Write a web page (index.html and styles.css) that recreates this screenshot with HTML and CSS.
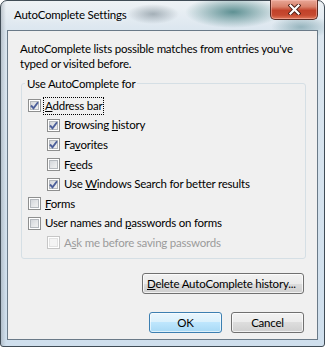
FILE: index.html
```html
<!DOCTYPE html>
<html>
<head>
<meta charset="utf-8">
<link rel="stylesheet" href="styles.css">
</head>
<body>
<div class="window">
  <div class="titlebar">
    <span class="title">AutoComplete Settings</span>
    <div class="close">
      <svg width="13" height="11" viewBox="0 0 13 11">
        <path d="M2.5 1.5 L10.5 9.5 M10.5 1.5 L2.5 9.5" stroke="#4a1d14" stroke-width="4" stroke-linecap="square" fill="none"/>
        <path d="M2.5 1.5 L10.5 9.5 M10.5 1.5 L2.5 9.5" stroke="#ffffff" stroke-width="2.2" stroke-linecap="square" fill="none"/>
      </svg>
    </div>
  </div>
  <div class="client">
    <p class="intro">AutoComplete lists possible matches from entries you've typed or visited before.</p>
    <fieldset class="group">
      <legend>Use AutoComplete for</legend>
      <div class="row"><span class="cb"><svg class="tick" viewBox="0 0 9 9"><path d="M1 4.5 L3.5 7.2 L8 1.2"/></svg></span><span class="label focus"><u>A</u>ddress bar</span></div>
      <div class="row sub"><span class="cb"><svg class="tick" viewBox="0 0 9 9"><path d="M1 4.5 L3.5 7.2 L8 1.2"/></svg></span><span class="label">Browsing <u>h</u>istory</span></div>
      <div class="row sub"><span class="cb"><svg class="tick" viewBox="0 0 9 9"><path d="M1 4.5 L3.5 7.2 L8 1.2"/></svg></span><span class="label">Fa<u>v</u>orites</span></div>
      <div class="row sub"><span class="cb"></span><span class="label">F<u>e</u>eds</span></div>
      <div class="row sub"><span class="cb"><svg class="tick" viewBox="0 0 9 9"><path d="M1 4.5 L3.5 7.2 L8 1.2"/></svg></span><span class="label">Use <u>W</u>indows Search for better results</span></div>
      <div class="row"><span class="cb"></span><span class="label"><u>F</u>orms</span></div>
      <div class="row"><span class="cb"></span><span class="label">User names and <u>p</u>asswords on forms</span></div>
      <div class="row sub disabled"><span class="cb"></span><span class="label">A<u>s</u>k me before saving passwords</span></div>
    </fieldset>
    <div class="actions">
      <button class="btn wide"><u>D</u>elete AutoComplete history...</button>
    </div>
    <div class="footer">
      <button class="btn default">OK</button>
      <button class="btn">Cancel</button>
    </div>
  </div>
</div>
</body>
</html>
```

FILE: styles.css
```css
* { box-sizing: border-box; }
html, body { margin: 0; padding: 0; }
body {
  width: 325px;
  height: 347px;
  overflow: hidden;
  background: #ffffff;
  font-family: Lato, "Segoe UI", sans-serif;
  font-size: 11.5px;
  letter-spacing: -0.22px;
  color: #000;
}
.window {
  width: 325px;
  height: 347px;
  border: 1px solid #404c56;
  border-radius: 7px 7px 3px 3px;
  padding: 0 6px 6px 6px;
  display: flex;
  flex-direction: column;
  background:
    radial-gradient(ellipse 26px 10px at 152px 13px, rgba(110,125,135,0.55), rgba(110,125,135,0)),
    radial-gradient(ellipse 48px 16px at 232px 11px, rgba(70,128,130,0.85), rgba(70,128,130,0)),
    radial-gradient(ellipse 30px 12px at 300px 26px, rgba(80,130,140,0.5), rgba(80,130,140,0)),
    linear-gradient(90deg, rgba(150,160,170,0.5) 0, rgba(150,160,170,0) 5px),
    linear-gradient(180deg, #eef2f5 0, #dbe6ef 30px, #cfdfed 100%);
}
.titlebar {
  height: 29px;
  display: flex;
  justify-content: space-between;
  align-items: flex-start;
}
.title {
  padding: 6px 0 0 7px;
  line-height: 16px;
  color: #000;
  text-shadow: 0 0 6px rgba(255,255,255,0.9);
}
.close {
  width: 48px;
  height: 20px;
  margin-top: -1px;
  border: 1px solid #5a2a22;
  border-top: none;
  border-radius: 0 0 5px 5px;
  background: linear-gradient(180deg, #e8a797 0, #d9826c 35%, #c2422a 55%, #c64a30 80%, #e07a5c 100%);
  box-shadow: inset 0 0 0 1px rgba(255,200,190,0.45);
  display: flex;
  align-items: center;
  justify-content: center;
}
.client {
  flex: 1;
  border: 1px solid #6a7a88;
  background: #f0f0f0;
  padding: 10px 11px 6px 12px;
  display: flex;
  flex-direction: column;
}
.intro {
  margin: 0;
  line-height: 15px;
}
.group {
  margin: 5px 0 0 1px;
  border: 1px solid #d5dfe5;
  border-radius: 3px;
  padding: 5px 6px 5px 6px;
  min-width: 0;
}
.group legend {
  padding: 0 2px;
  margin-left: -3px;
  line-height: 15px;
}
.row {
  height: 19.6px;
  display: flex;
  align-items: center;
}
.row.sub { padding-left: 19px; }
.cb {
  width: 13px;
  height: 13px;
  flex: none;
  border: 1px solid #8e8f8f;
  background: linear-gradient(135deg, #cbcfd5 0, #e8e9ea 60%, #f6f6f6 100%);
  box-shadow: inset 0 0 0 1px #fff, inset 0 0 0 2px #b4b8bd;
  position: relative;
}
.tick {
  position: absolute;
  left: 1px;
  top: 1px;
  width: 9px;
  height: 9px;
  fill: none;
  stroke: #4c5f9a;
  stroke-width: 1.9;
}
.label {
  margin-left: 3px;
  padding: 0 1px;
  line-height: 16px;
  white-space: nowrap;
}
.label.focus { outline: 1px dotted #000; outline-offset: 0; }
.disabled .label { color: #9b9b9b; }
.disabled .cb {
  border-color: #c6c6c6;
  background: #f4f4f4;
  box-shadow: inset 0 0 0 1px #fff, inset 0 0 0 2px #e2e2e2;
}
.actions {
  margin-top: 14px;
  padding-right: 2px;
  display: flex;
  justify-content: flex-end;
}
.footer {
  margin-top: 18px;
  padding-right: 2px;
  display: flex;
  justify-content: flex-end;
  gap: 9px;
}
.btn {
  height: 21px;
  width: 73px;
  padding: 0 4px;
  font-family: inherit;
  font-size: inherit;
  letter-spacing: inherit;
  color: #000;
  line-height: 17px;
  white-space: nowrap;
  border: 1px solid #707070;
  border-radius: 3px;
  background: linear-gradient(180deg, #f2f2f2 0, #ebebeb 50%, #dddddd 50%, #cfcfcf 100%);
  box-shadow: inset 0 0 0 1px rgba(255,255,255,0.7);
  text-align: center;
}
.btn.wide { width: 162px; text-align: left; }
.btn.default {
  border-color: #3c7fb1;
  background: linear-gradient(180deg, #eaf6fd 0, #d9f0fc 50%, #bee6fd 50%, #a7d9f5 100%);
  box-shadow: inset 0 0 0 1px rgba(255,255,255,0.6);
}
```
